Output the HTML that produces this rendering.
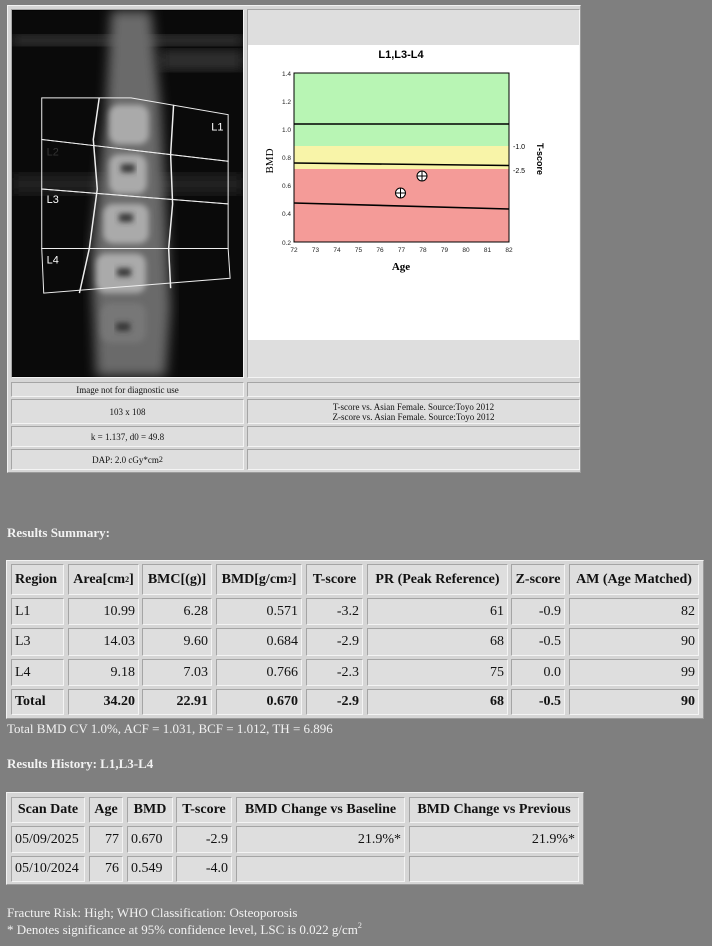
<!DOCTYPE html>
<html><head><meta charset="utf-8"><style>
body{margin:0;width:712px;height:946px;background:#7f7f7f;position:relative;overflow:hidden;font-family:"Liberation Serif",serif;color:#111}
.t{position:absolute;background:#d6d6d6;border:1px solid;border-color:#f2f2f2 #9a9a9a #9a9a9a #f2f2f2}
.c{position:absolute;background:#dedede;border:1px solid;border-color:#a5a5a5 #f4f4f4 #f4f4f4 #a5a5a5;box-sizing:border-box;font-size:14px;display:flex;align-items:center;padding:0 3px;white-space:nowrap}
.r{justify-content:flex-end}.m{justify-content:center}.b{font-weight:bold}
.s{font-size:9px;justify-content:center;text-align:center;line-height:10px}
.txt{position:absolute;color:#f2f2f2;font-size:13px;white-space:nowrap}
sup{font-size:8px;vertical-align:6px;line-height:0}
</style></head><body>
<div class="t" style="left:7px;top:5px;width:572px;height:466px"></div>
<div class="c" style="left:11px;top:9px;width:233px;height:369px;background:#000;padding:0;overflow:hidden">
<svg width="233" height="369" viewBox="0 0 233 369">
<defs><filter id="bl"><feGaussianBlur stdDeviation="6"/></filter><filter id="bl2"><feGaussianBlur stdDeviation="3"/></filter></defs>
<rect width="233" height="369" fill="#0a0a0a"/>
<rect x="0" y="25" width="233" height="10" fill="#3a3a3a" filter="url(#bl)"/>
<rect x="150" y="40" width="83" height="20" fill="#333" filter="url(#bl)"/>
<rect x="0" y="165" width="233" height="20" fill="#222" filter="url(#bl)"/>
<path d="M100 0 L140 0 L150 100 L160 300 L155 369 L85 369 L80 250 L95 100 Z" fill="#6a6a6a" filter="url(#bl)"/>
<g fill="#aaa" filter="url(#bl2)">
<rect x="98" y="95" width="40" height="40" rx="10"/>
<rect x="98" y="145" width="38" height="40" rx="10"/>
<rect x="92" y="195" width="46" height="40" rx="10"/>
<rect x="85" y="245" width="50" height="40" rx="10"/>
<rect x="90" y="295" width="45" height="40" rx="10" fill="#777"/>
</g>
<g fill="#333" filter="url(#bl2)">
<rect x="110" y="155" width="14" height="8"/><rect x="108" y="205" width="14" height="8"/><rect x="106" y="260" width="14" height="8"/><rect x="105" y="315" width="14" height="8"/>
</g>
<g stroke="#eee" stroke-width="1" fill="none">
<path d="M30 88 L120 88 L218 105 L218 152 L30 130 Z"/>
<path d="M30 130 L218 152 L218 195 L30 180 Z"/>
<path d="M30 180 L218 195 L218 240 L30 240 Z"/>
<path d="M30 240 L218 240 L220 270 L32 285 Z"/>
<path d="M88 88 L82 130 L86 180 L78 240 L68 285 M163 95 L160 145 L162 195 L158 240 L160 280" stroke-width="1.5"/>
</g>
<text x="201" y="121" fill="#fff" font-family="Liberation Sans" font-size="11">L1</text>
<text x="35" y="146" fill="#333" font-family="Liberation Sans" font-size="11">L2</text>
<text x="35" y="194" fill="#fff" font-family="Liberation Sans" font-size="11">L3</text>
<text x="35" y="255" fill="#fff" font-family="Liberation Sans" font-size="11">L4</text>
</svg></div>
<div class="c" style="left:247px;top:9px;width:333px;height:369px;padding:0">
<svg style="position:absolute;left:0;top:35px" width="331" height="295" viewBox="248 44 331 295">
<rect x="248" y="44" width="331" height="295" fill="#fff"/>
<text x="401" y="57" text-anchor="middle" font-family="Liberation Sans" font-weight="bold" font-size="11">L1,L3-L4</text>
<rect x="294" y="72" width="215" height="73" fill="#b8f5b4"/>
<rect x="294" y="145" width="215" height="23" fill="#f8f4a8"/>
<rect x="294" y="168" width="215" height="73" fill="#f49b98"/>
<g stroke="#000" fill="none">
<path d="M294 72 V241 H509 V72 Z" stroke-width="1"/>
<path d="M294 123 H509" stroke-width="1.6"/>
<path d="M294 162 L509 164.5" stroke-width="1.6"/>
<path d="M294 202 L509 208" stroke-width="1.6"/>
<circle cx="400.5" cy="192" r="5" fill="#fff"/><path d="M395.5 192 h10 M400.5 187 v10"/>
<circle cx="422" cy="175" r="5" fill="#fff"/><path d="M417 175 h10 M422 170 v10"/>
</g>
<g font-family="Liberation Sans" font-size="6.5" fill="#222" text-anchor="end">
<text x="291" y="75">1.4</text><text x="291" y="103">1.2</text><text x="291" y="131">1.0</text><text x="291" y="159">0.8</text><text x="291" y="187">0.6</text><text x="291" y="215">0.4</text><text x="291" y="244">0.2</text>
</g>
<g font-family="Liberation Sans" font-size="6.5" fill="#222" text-anchor="middle">
<text x="294" y="251">72</text><text x="315.5" y="251">73</text><text x="337" y="251">74</text><text x="358.5" y="251">75</text><text x="380" y="251">76</text><text x="401.5" y="251">77</text><text x="423" y="251">78</text><text x="444.5" y="251">79</text><text x="466" y="251">80</text><text x="487.5" y="251">81</text><text x="509" y="251">82</text>
</g>
<text x="513" y="148" font-family="Liberation Sans" font-size="7">-1.0</text>
<text x="513" y="172" font-family="Liberation Sans" font-size="7">-2.5</text>
<text x="401" y="269" text-anchor="middle" font-size="11" font-weight="bold">Age</text>
<text transform="translate(273 160) rotate(-90)" text-anchor="middle" font-size="11">BMD</text>
<text transform="translate(537 158) rotate(90)" text-anchor="middle" font-family="Liberation Sans" font-weight="bold" font-size="9">T-score</text>
</svg></div>
<div class="c s" style="left:11px;top:382px;width:233px;height:15px">Image not for diagnostic use</div>
<div class="c" style="left:247px;top:382px;width:333px;height:15px"></div>
<div class="c s" style="left:11px;top:399px;width:233px;height:25px">103 x 108</div>
<div class="c s" style="left:247px;top:399px;width:333px;height:25px">T-score vs. Asian Female. Source:Toyo 2012<br>Z-score vs. Asian Female. Source:Toyo 2012</div>
<div class="c s" style="left:11px;top:426px;width:233px;height:21px">k = 1.137, d0 = 49.8</div>
<div class="c" style="left:247px;top:426px;width:333px;height:21px"></div>
<div class="c s" style="left:11px;top:449px;width:233px;height:21px">DAP: 2.0 cGy*cm<sup>2</sup></div>
<div class="c" style="left:247px;top:449px;width:333px;height:21px"></div>

<div class="txt b" style="left:7px;top:525px">Results Summary:</div>
<div class="t" style="left:6px;top:560px;width:696px;height:157px"></div>
<div class="c b" style="left:11px;top:564px;width:53px;height:31px">Region</div>
<div class="c b m" style="left:68px;top:564px;width:71px;height:31px">Area[cm<sup>2</sup>]</div>
<div class="c b m" style="left:142px;top:564px;width:70px;height:31px">BMC[(g)]</div>
<div class="c b m" style="left:216px;top:564px;width:86px;height:31px">BMD[g/cm<sup>2</sup>]</div>
<div class="c b m" style="left:306px;top:564px;width:57px;height:31px">T-score</div>
<div class="c b m" style="left:367px;top:564px;width:141px;height:31px">PR (Peak Reference)</div>
<div class="c b m" style="left:511px;top:564px;width:54px;height:31px;padding:0">Z-score</div>
<div class="c b m" style="left:569px;top:564px;width:130px;height:31px">AM (Age Matched)</div>

<div class="c" style="left:11px;top:598px;width:53px;height:27px">L1</div>
<div class="c r" style="left:68px;top:598px;width:71px;height:27px">10.99</div>
<div class="c r" style="left:142px;top:598px;width:70px;height:27px">6.28</div>
<div class="c r" style="left:216px;top:598px;width:86px;height:27px">0.571</div>
<div class="c r" style="left:306px;top:598px;width:57px;height:27px">-3.2</div>
<div class="c r" style="left:367px;top:598px;width:141px;height:27px">61</div>
<div class="c r" style="left:511px;top:598px;width:54px;height:27px">-0.9</div>
<div class="c r" style="left:569px;top:598px;width:130px;height:27px">82</div>

<div class="c" style="left:11px;top:628px;width:53px;height:28px">L3</div>
<div class="c r" style="left:68px;top:628px;width:71px;height:28px">14.03</div>
<div class="c r" style="left:142px;top:628px;width:70px;height:28px">9.60</div>
<div class="c r" style="left:216px;top:628px;width:86px;height:28px">0.684</div>
<div class="c r" style="left:306px;top:628px;width:57px;height:28px">-2.9</div>
<div class="c r" style="left:367px;top:628px;width:141px;height:28px">68</div>
<div class="c r" style="left:511px;top:628px;width:54px;height:28px">-0.5</div>
<div class="c r" style="left:569px;top:628px;width:130px;height:28px">90</div>

<div class="c" style="left:11px;top:659px;width:53px;height:27px">L4</div>
<div class="c r" style="left:68px;top:659px;width:71px;height:27px">9.18</div>
<div class="c r" style="left:142px;top:659px;width:70px;height:27px">7.03</div>
<div class="c r" style="left:216px;top:659px;width:86px;height:27px">0.766</div>
<div class="c r" style="left:306px;top:659px;width:57px;height:27px">-2.3</div>
<div class="c r" style="left:367px;top:659px;width:141px;height:27px">75</div>
<div class="c r" style="left:511px;top:659px;width:54px;height:27px">0.0</div>
<div class="c r" style="left:569px;top:659px;width:130px;height:27px">99</div>

<div class="c b" style="left:11px;top:689px;width:53px;height:26px">Total</div>
<div class="c b r" style="left:68px;top:689px;width:71px;height:26px">34.20</div>
<div class="c b r" style="left:142px;top:689px;width:70px;height:26px">22.91</div>
<div class="c b r" style="left:216px;top:689px;width:86px;height:26px">0.670</div>
<div class="c b r" style="left:306px;top:689px;width:57px;height:26px">-2.9</div>
<div class="c b r" style="left:367px;top:689px;width:141px;height:26px">68</div>
<div class="c b r" style="left:511px;top:689px;width:54px;height:26px">-0.5</div>
<div class="c b r" style="left:569px;top:689px;width:130px;height:26px">90</div>

<div class="txt" style="left:7px;top:721px">Total BMD CV 1.0%, ACF = 1.031, BCF = 1.012, TH = 6.896</div>
<div class="txt b" style="left:7px;top:756px">Results History: L1,L3-L4</div>

<div class="t" style="left:6px;top:792px;width:576px;height:91px"></div>
<div class="c b m" style="left:11px;top:797px;width:74px;height:26px">Scan Date</div>
<div class="c b m" style="left:89px;top:797px;width:34px;height:26px">Age</div>
<div class="c b m" style="left:127px;top:797px;width:46px;height:26px">BMD</div>
<div class="c b m" style="left:176px;top:797px;width:56px;height:26px">T-score</div>
<div class="c b m" style="left:236px;top:797px;width:169px;height:26px">BMD Change vs Baseline</div>
<div class="c b m" style="left:409px;top:797px;width:170px;height:26px">BMD Change vs Previous</div>
<div class="c" style="left:11px;top:826px;width:74px;height:27px">05/09/2025</div>
<div class="c r" style="left:89px;top:826px;width:34px;height:27px">77</div>
<div class="c" style="left:127px;top:826px;width:46px;height:27px">0.670</div>
<div class="c r" style="left:176px;top:826px;width:56px;height:27px">-2.9</div>
<div class="c r" style="left:236px;top:826px;width:169px;height:27px">21.9%*</div>
<div class="c r" style="left:409px;top:826px;width:170px;height:27px">21.9%*</div>
<div class="c" style="left:11px;top:856px;width:74px;height:26px">05/10/2024</div>
<div class="c r" style="left:89px;top:856px;width:34px;height:26px">76</div>
<div class="c" style="left:127px;top:856px;width:46px;height:26px">0.549</div>
<div class="c r" style="left:176px;top:856px;width:56px;height:26px">-4.0</div>
<div class="c" style="left:236px;top:856px;width:169px;height:26px"></div>
<div class="c" style="left:409px;top:856px;width:170px;height:26px"></div>

<div class="txt" style="left:7px;top:905px">Fracture Risk: High; WHO Classification: Osteoporosis</div>
<div class="txt" style="left:7px;top:922px">* Denotes significance at 95% confidence level, LSC is 0.022 g/cm<sup>2</sup></div>
</body></html>
